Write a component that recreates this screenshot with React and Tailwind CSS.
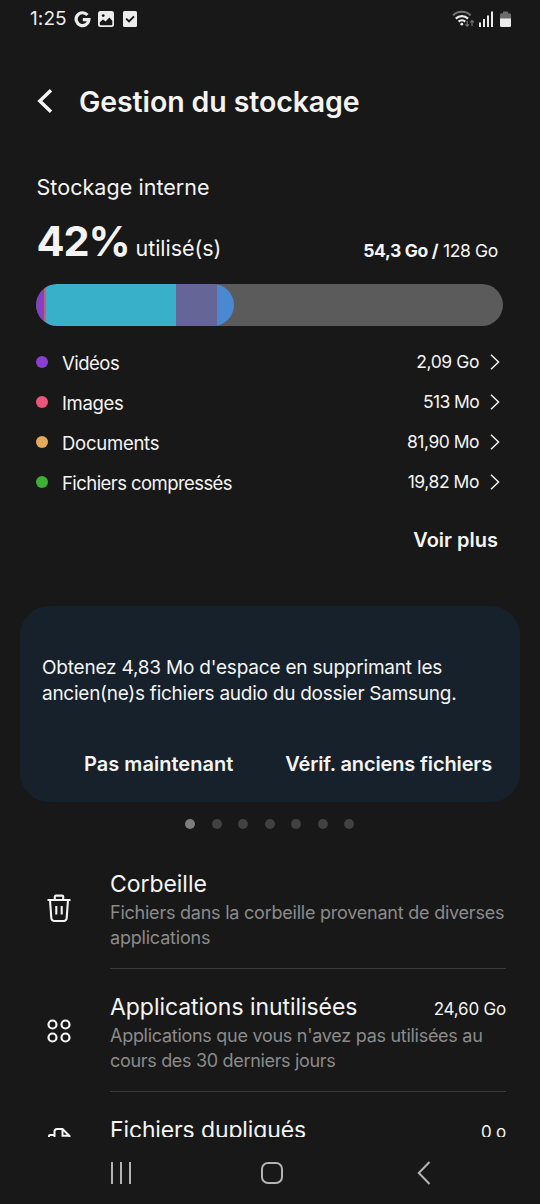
const categories = [
  { label: 'Vidéos', size: '2,09 Go', dot: 'bg-[#8a3fd0]', labelClass: 'tracking-[-0.5px]', sizeClass: 'text-[17.5px] tracking-[-0.4px]' },
  { label: 'Images', size: '513 Mo', dot: 'bg-[#ec5579]', labelClass: 'tracking-[-0.35px]', sizeClass: 'text-[17.5px] tracking-[-0.65px]' },
  { label: 'Documents', size: '81,90 Mo', dot: 'bg-[#e3aa5b]', labelClass: 'tracking-[-0.25px]', sizeClass: 'text-[17.5px] tracking-[-0.5px]' },
  { label: 'Fichiers compressés', size: '19,82 Mo', dot: 'bg-[#3fae34]', labelClass: 'tracking-[-0.57px]', sizeClass: 'text-[17.5px] tracking-[-0.45px]' },
]

function StatusBar() {
  return (
    <div className="flex h-[38px] shrink-0 items-center pl-[30px] pr-[29px] text-[#ececec]">
      <span className="w-[37px] whitespace-nowrap text-[19px] tracking-[0.1px]">1:25</span>
      <svg className="ml-[7px]" width="17" height="17" viewBox="0 0 17 17" fill="none" stroke="currentColor" strokeWidth="3.2">
        <path d="M13.4 4A6.4 6.4 0 1 0 14.9 8.7H8.8" />
      </svg>
      <svg className="ml-[7px]" width="16" height="16" viewBox="0 0 16 16">
        <rect width="16" height="16" rx="2.5" fill="currentColor" />
        <path d="M1.800 11.200 5 8.600l2.600 1.800L11.300 6.500l3 3.200v3.500a1 1 0 0 1-1 1H2.800a1 1 0 0 1-1-1z" fill="#181818" />
        <circle cx="5.2" cy="4.6" r="1.4" fill="#181818" />
      </svg>
      <svg className="ml-[9px]" width="14" height="16" viewBox="0 0 14 16">
        <rect width="14" height="16" rx="1.500" fill="currentColor" />
        <path d="m3.200 7.600 2.800 2.800 5-5" fill="none" stroke="#181818" strokeWidth="2" />
      </svg>
      <svg className="ml-auto" width="22" height="18" viewBox="0 0 22 18" fill="none">
        <path d="M1 5.4C5.6.6 14 .6 18.6 5.4" stroke="#777" strokeWidth="2" />
        <path d="M3.8 8.6c3.4-3.4 8.8-3.4 12.2 0" stroke="currentColor" strokeWidth="2.200" />
        <path d="M6.6 11.6c1.8-1.8 4.800-1.800 6.600 0" stroke="currentColor" strokeWidth="2.200" />
        <circle cx="9.8" cy="14.2" r="1.4" fill="currentColor" />
        <path d="M15.2 11v5M13.4 14.4l1.8 1.8 1.8-1.8M20 16v-5M18.2 12.4l1.8-1.8 1.8 1.8" stroke="#777" strokeWidth="1.2" />
      </svg>
      <svg className="ml-[5px]" width="14" height="16" viewBox="0 0 14 16" fill="currentColor">
        <rect x="0" y="11.5" width="2" height="4.5" />
        <rect x="4" y="8" width="2" height="8" />
        <rect x="8" y="4.5" width="2" height="11.5" />
        <rect x="12" y="0.5" width="2" height="15.5" />
      </svg>
      <svg className="ml-[7px]" width="11" height="16" viewBox="0 0 11 16">
        <path d="M3 .5h5v1.7h1.5A1.5 1.5 0 0 1 11 3.7V8H0V3.7a1.5 1.5 0 0 1 1.5-1.5H3z" fill="#6b6b6b" />
        <path d="M0 7.5h11v7a1.5 1.5 0 0 1-1.5 1.5h-8A1.5 1.5 0 0 1 0 14.5z" fill="currentColor" />
      </svg>
    </div>
  )
}

function UsageBar() {
  return (
    <div className="mr-[37px] ml-[36px] mt-[16px] h-[42px] overflow-hidden rounded-full bg-[#5b5b5c]">
      <div className="flex h-full w-[198px] overflow-hidden rounded-full">
        <div className="w-[8px] bg-[#8640c3]" />
        <div className="w-[1.5px] bg-[#c2607c]" />
        <div className="w-[130.5px] bg-[#39b0ca]" />
        <div className="w-[41px] bg-[#666597]" />
        <div className="flex-1 bg-[#4b88d2]" />
      </div>
    </div>
  )
}

function CategoryRow({ item }) {
  return (
    <div className="flex h-[40px] items-center">
      <span className={`size-[12px] rounded-full ${item.dot}`} />
      <span className={`ml-[14px] pt-[3px] text-[18.5px] ${item.labelClass}`}>{item.label}</span>
      <span className={`ml-auto pt-px ${item.sizeClass}`}>{item.size}</span>
      <svg className="ml-[11px]" width="10" height="16" viewBox="0 0 10 16" fill="none" stroke="currentColor" strokeWidth="1.5">
        <path d="m1 .8 7.5 7.2L1 15.2" />
      </svg>
    </div>
  )
}

function TipCard() {
  return (
    <div className="mx-[20px] mt-[52px] h-[196px] shrink-0 rounded-[29px] bg-[#16212c] px-[22px] pt-[49px]">
      <p className="text-[19px] leading-[26px] whitespace-nowrap">
        <span className="tracking-[-0.2px]">Obtenez 4,83 Mo d'espace en supprimant les</span>
        <br />
        <span className="tracking-[-0.26px]">ancien(ne)s fichiers audio du dossier Samsung.</span>
      </p>
      <div className="mt-[43px] flex justify-between pr-[6px] pl-[42px] text-[20px] leading-[28px] font-semibold whitespace-nowrap">
        <button className="tracking-[0.03px]">Pas maintenant</button>
        <button className="tracking-[-0.14px]">Vérif. anciens fichiers</button>
      </div>
    </div>
  )
}

function PageDots() {
  return (
    <div className="mt-[17px] flex justify-center gap-[16.5px] pr-px">
      {[0, 1, 2, 3, 4, 5, 6].map((i) => (
        <span key={i} className={`size-[10px] rounded-full ${i === 0 ? 'bg-[#7d7d7d]' : 'bg-[#414141]'}`} />
      ))}
    </div>
  )
}

function TrashIcon() {
  return (
    <svg width="24" height="28" viewBox="0 0 24 28" fill="none" stroke="currentColor" strokeWidth="2.1">
      <path d="M.5 6h23M7.8 6V2.6a1 1 0 0 1 1-1h6.4a1 1 0 0 1 1 1V6M3 6l1.3 17.8A3 3 0 0 0 7.3 27h9.4a3 3 0 0 0 3-3.2L21 6M9.3 12v8.5M14.7 12v8.5" />
    </svg>
  )
}

function AppsIcon() {
  return (
    <svg width="24" height="24" viewBox="0 0 24 24" fill="none" stroke="currentColor" strokeWidth="2.2">
      <circle cx="5.5" cy="5.5" r="4" />
      <circle cx="18.5" cy="5.5" r="4" />
      <circle cx="5.5" cy="18.5" r="4" />
      <circle cx="18.5" cy="18.5" r="4" />
    </svg>
  )
}

function DuplicateIcon() {
  return (
    <svg width="24" height="26" viewBox="0 0 24 26" fill="none" stroke="currentColor" strokeWidth="2">
      <path d="M7.5 18V3.5A2.500 2.500 0 0 1 10 1h5.500l7 7v10a2 2 0 0 1-2 2h-11a2 2 0 0 1-2-2M15.500 1v6.800h7M8 7H3a1 1 0 0 0-1 1v15a2 2 0 0 0 2 2h10a2 2 0 0 0 2-2v-3" />
    </svg>
  )
}

function StorageItem({ icon, title, titleClass, size, short, children }) {
  return (
    <div className={`flex shrink-0 ${short ? 'h-[98px]' : 'h-[123px]'}`}>
      <div className="flex w-[110px] shrink-0 items-center pl-[47px]">{icon}</div>
      <div className="mr-[34px] min-w-0 flex-1 border-b border-[#3b3b3b] pt-[22px] whitespace-nowrap">
        <div className="flex h-[32px] items-center justify-between">
          <span className={`text-[23px] ${titleClass}`}>{title}</span>
          <span className="relative top-[3px] text-[17px] tracking-[-0.2px]">{size}</span>
        </div>
        <p className="text-[18px] leading-[25px] text-[#8b8b8b]">{children}</p>
      </div>
    </div>
  )
}

function NavBar() {
  return (
    <div className="flex h-[67px] shrink-0 items-center pb-[2px] pt-[7px] text-[#b3b3b3]">
      <svg className="ml-[110px]" width="22" height="22" viewBox="0 0 22 22" stroke="currentColor" strokeWidth="2">
        <path d="M2 0v22M11 0v22M20 0v22" />
      </svg>
      <svg className="ml-[129px]" width="22" height="22" viewBox="0 0 22 22" fill="none" stroke="currentColor" strokeWidth="2">
        <rect x="1" y="1" width="20" height="20" rx="6" />
      </svg>
      <svg className="ml-[134px]" width="14" height="24" viewBox="0 0 14 24" fill="none" stroke="currentColor" strokeWidth="2">
        <path d="M12.5 1 1.8 12l10.7 11" />
      </svg>
    </div>
  )
}

export default function App() {
  return (
    <div className="flex h-[1204px] w-[540px] flex-col overflow-hidden bg-[#181818] font-['Inter','Noto_Sans',sans-serif] text-[#f4f4f4]">
      <StatusBar />
      <div className="flex min-h-0 flex-1 flex-col overflow-hidden">
        <header className="mt-[43px] flex h-[40px] shrink-0 items-center pl-[37px]">
          <svg width="16" height="24" viewBox="0 0 16 24" fill="none" stroke="currentColor" strokeWidth="3.4">
            <path d="M14 1.2 2.8 12 14 22.8" />
          </svg>
          <h1 className="ml-[26px] pt-[2px] text-[28.5px] font-semibold tracking-[-0.1px] whitespace-nowrap">Gestion du stockage</h1>
        </header>

        <section className="mt-[51px] shrink-0">
          <h2 className="pl-[36.5px] text-[21.5px] leading-[30px] tracking-[0.05px]">Stockage interne</h2>
          <div className="mt-[12px] flex h-[54px] items-baseline pr-[42px] pl-[36.5px] leading-[54px] whitespace-nowrap">
            <span className="text-[41.5px] font-bold tracking-[-1.1px]">42%</span>
            <span className="ml-[6px] text-[21.5px] tracking-[-0.05px]">utilisé(s)</span>
            <span className="relative top-px ml-auto text-[17.5px] tracking-[-0.33px]">
              <b>54,3 Go /</b> 128 Go
            </span>
          </div>
          <UsageBar />
          <div className="mt-[16px] pr-[40px] pl-[36px]">
            {categories.map((item) => (
              <CategoryRow key={item.label} item={item} />
            ))}
          </div>
          <div className="mt-[24px] flex justify-end pr-[42px]">
            <button className="text-[20px] leading-[28px] font-semibold">Voir plus</button>
          </div>
        </section>

        <TipCard />
        <PageDots />

        <div className="mt-[17px] shrink-0">
          <StorageItem icon={<TrashIcon />} title="Corbeille" titleClass="tracking-[-0.05px]">
            <span className="tracking-[-0.23px]">Fichiers dans la corbeille provenant de diverses</span>
            <br />
            <span className="tracking-[-0.2px]">applications</span>
          </StorageItem>
          <StorageItem icon={<AppsIcon />} title="Applications inutilisées" titleClass="tracking-[-0.05px]" size="24,60 Go">
            <span className="tracking-[-0.28px]">Applications que vous n'avez pas utilisées au</span>
            <br />
            <span className="tracking-[-0.32px]">cours des 30 derniers jours</span>
          </StorageItem>
          <StorageItem icon={<DuplicateIcon />} title="Fichiers dupliqués" titleClass="tracking-[-0.13px]" size="0 o" short />
        </div>
      </div>
      <NavBar />
    </div>
  )
}
